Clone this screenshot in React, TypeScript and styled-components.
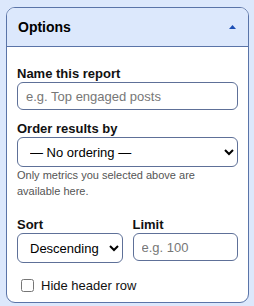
import styled, { createGlobalStyle } from "styled-components"

const GlobalStyle = createGlobalStyle`
  html, body {
    margin: 0;
    background: #dce8fc;
    font-family: "Liberation Sans", Arial, sans-serif;
  }
`

const Page = styled.div`
  padding: 7px 5px 4px 6px;
`

const Panel = styled.section`
  border: 1px solid #5a74a8;
  border-radius: 9px;
  overflow: hidden;
  background: #fff;
`

const Header = styled.div`
  height: 38px;
  display: flex;
  align-items: center;
  justify-content: space-between;
  padding: 0 12px 0 11px;
  background: #dce8fc;
  border-bottom: 1px solid #5a74a8;
`

const Title = styled.h2`
  margin: 0;
  font-size: 14px;
  font-weight: 700;
  color: #000;
`

const Body = styled.div`
  padding: 19px 10px 9px;
`

const Field = styled.div<{ $gap?: number }>`
  display: flex;
  flex-direction: column;
  margin-top: ${({ $gap }) => $gap ?? 0}px;
`

const Label = styled.label`
  font-size: 13px;
  line-height: 15px;
  font-weight: 700;
  color: #111;
  margin-bottom: 1px;
`

const TextInput = styled.input`
  box-sizing: border-box;
  width: 100%;
  height: 28px;
  padding: 0 8px;
  border: 1px solid #5e7098;
  border-radius: 6px;
  font-family: inherit;
  font-size: 13px;
  color: #000;
  background: #fff;
  &::placeholder {
    color: #777;
  }
`

const Select = styled.select`
  box-sizing: border-box;
  width: 100%;
  height: 30px;
  padding: 0 4px 0 8px;
  border: 1px solid #5e7098;
  border-radius: 6px;
  font-family: inherit;
  font-size: 13px;
  color: #000;
  background: #fff;
`

const Help = styled.p`
  margin: 0;
  font-size: 11px;
  line-height: 16px;
  color: #555;
`

const Row = styled.div`
  display: grid;
  grid-template-columns: 1fr 1fr;
  gap: 10px;
  margin-top: 18px;
`

const CheckRow = styled.label`
  display: flex;
  align-items: center;
  gap: 4px;
  margin-top: 15px;
  font-size: 13px;
  line-height: 15px;
  color: #111;
`

const Check = styled.input`
  width: 13px;
  height: 13px;
  margin: 0 3px 0 4px;
`

export default function App() {
  return (
    <Page>
      <GlobalStyle />
      <Panel>
        <Header>
          <Title>Options</Title>
          <svg width="7" height="4" viewBox="0 0 7 4">
            <path d="M3.5 0 L7 4 L0 4 Z" fill="#1d4fb5" />
          </svg>
        </Header>
        <Body>
          <Field>
            <Label>Name this report</Label>
            <TextInput placeholder="e.g. Top engaged posts" />
          </Field>
          <Field $gap={11}>
            <Label>Order results by</Label>
            <Select defaultValue="">
              <option value="">— No ordering —</option>
            </Select>
          </Field>
          <Help>Only metrics you selected above are available here.</Help>
          <Row>
            <Field>
              <Label>Sort</Label>
              <Select defaultValue="desc">
                <option value="desc">Descending</option>
                <option value="asc">Ascending</option>
              </Select>
            </Field>
            <Field>
              <Label>Limit</Label>
              <TextInput placeholder="e.g. 100" />
            </Field>
          </Row>
          <CheckRow>
            <Check type="checkbox" />
            Hide header row
          </CheckRow>
        </Body>
      </Panel>
    </Page>
  )
}
